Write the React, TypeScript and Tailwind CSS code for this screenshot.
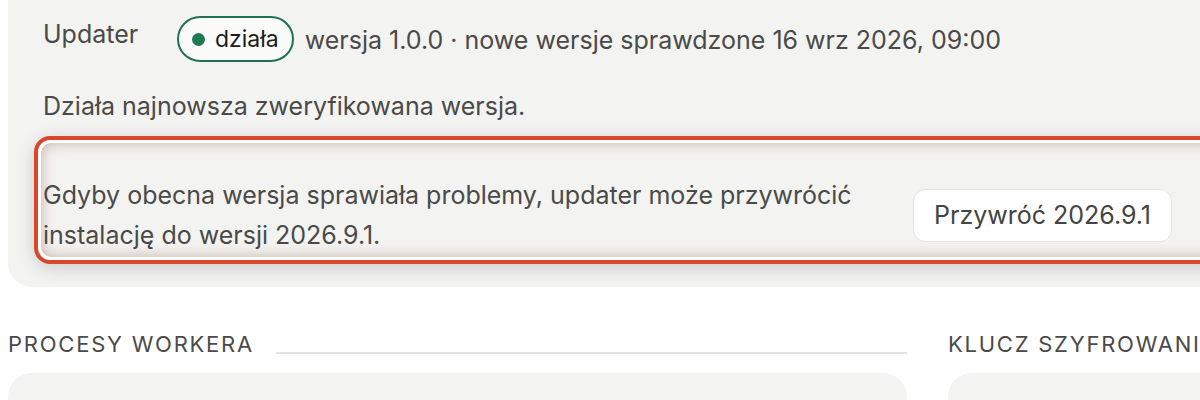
import React from 'react';

const Section: React.FC<{ title: string }> = ({ title }) => (
  <div>
    <div className="flex items-end gap-[22px]">
      <h3 className="text-[22px] leading-[30px] tracking-[0.08em] uppercase text-[#4a4a48] whitespace-nowrap">{title}</h3>
      <div className="flex-1 h-[2px] bg-[#e4e4e1] mb-[5px]" />
    </div>
    <div className="mt-[14px] h-[120px] rounded-[24px] bg-[#f3f3f1]" />
  </div>
);

const App: React.FC = () => {
  return (
    <div className="w-full h-[400px] overflow-hidden bg-white" style={{ fontFamily: 'Inter, "Noto Sans", sans-serif' }}>
      <div className="w-[1500px] pl-2">
        <div className="-mt-[20px] rounded-[24px] bg-[#f3f3f1] pt-[36px] pl-[35px] pb-[23px] text-[25px] text-[#4a4a48]">
          <div className="flex items-start">
            <div className="w-[134px] leading-[36px]">Updater</div>
            <span className="flex items-center gap-[10px] h-[46px] px-[13px] rounded-full border-2 border-[#22704f] bg-[#fbfbfa] text-[#1c1c1c] text-[23px] leading-none">
              <span className="w-[13px] h-[13px] rounded-full bg-[#1e7a52]" />
              działa
            </span>
            <span className="ml-[11px] leading-[48px]">wersja 1.0.0 · nowe wersje sprawdzone 16 wrz 2026, 09:00</span>
          </div>

          <p className="mt-[24px] leading-[36px]">Działa najnowsza zweryfikowana wersja.</p>

          <div className="mt-[12px] -ml-[9px] rounded-[16px] border-4 border-[#d9472b] bg-white p-[3px] shadow-[0_4px_18px_rgba(0,0,0,0.16)]">
            <div className="flex items-center rounded-[10px] bg-[#f3f3f1] pl-[2px] pt-[32px] pb-[2px] shadow-[inset_0_0_14px_rgba(120,70,50,0.38)]">
              <p className="w-[870px] leading-[40px]">
                Gdyby obecna wersja sprawiała problemy, updater może przywrócić instalację do wersji 2026.9.1.
              </p>
              <button className="h-[53px] px-[20px] rounded-[12px] border border-[#e4e4e1] bg-white text-[#444442] leading-none">
                Przywróć 2026.9.1
              </button>
            </div>
          </div>
        </div>

        <div className="mt-[42px] grid grid-cols-[899px_560px] gap-[41px]">
          <Section title="Procesy workera" />
          <Section title="Klucz szyfrowania" />
        </div>
      </div>
    </div>
  );
};

export default App;
